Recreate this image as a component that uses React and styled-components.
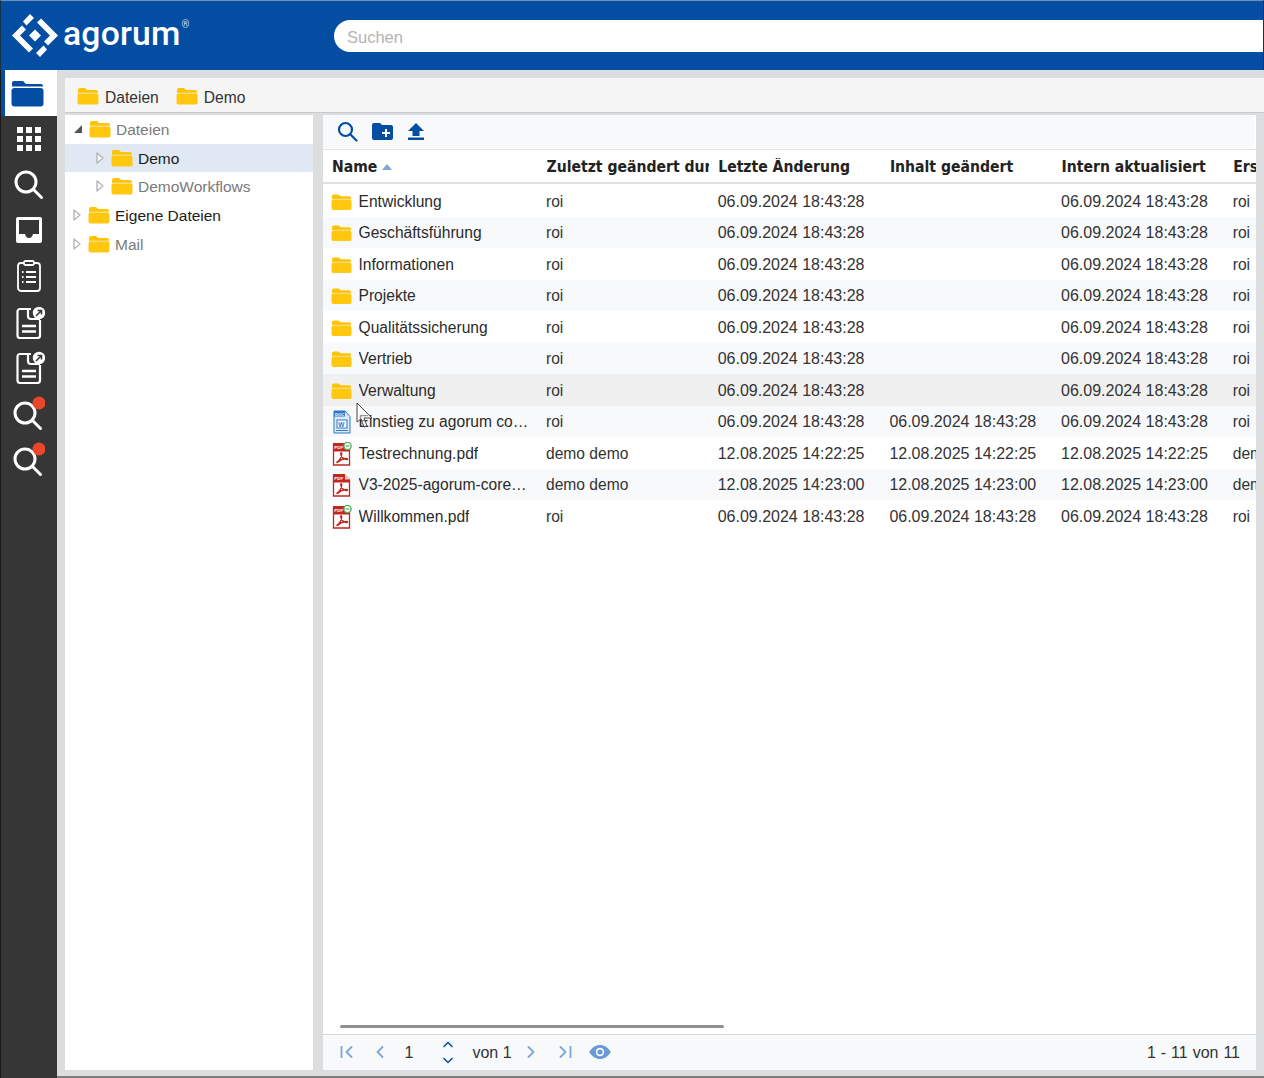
import React from "react";
import styled, { createGlobalStyle } from "styled-components";

const Global = createGlobalStyle`
  html, body { margin: 0; padding: 0; height: 100%; overflow: hidden; background: #dcdddf; }
  #root { height: 1078px; width: 1264px; overflow: hidden; }
  * { box-sizing: border-box; }
`;

const Page = styled.div`
  position: relative;
  width: 1264px; height: 1078px;
  display: flex; flex-direction: column;
  font-family: "Liberation Sans", Arial, sans-serif;
  font-size: 16px; color: #222;
  background: #dcdddf;
  overflow: hidden;
`;
const Header = styled.header`
  height: 70px; flex: none;
  background: #034ea2;
  border-top: 1px solid #6f8fb5;
  border-left: 1px solid #1c2f4a;
  border-right: 1px solid #1c2f4a;
  display: flex; align-items: flex-start;
`;
const Logo = styled.div`
  width: 333px; height: 69px; padding: 11px 0 0 11px;
  display: flex; align-items: flex-start; gap: 5px; flex: none;
`;
const LogoWord = styled.span`
  font-family: Roboto, sans-serif; padding-top: 1px;
  font-weight: 500; font-size: 33.7px; line-height: 42px; color: #fff;
  letter-spacing: 0.2px;
`;
const Reg = styled.sup`
  font-size: 10px; line-height: 9px; vertical-align: 17px; color: #cfdcee; font-weight: 400; margin-left: 1px;
`;
const Search = styled.div`
  margin-top: 19px; flex: 1; height: 32px;
  background: #fff; border-radius: 16px 0 0 16px;
  padding-left: 13px; line-height: 35px;
  font-size: 16.5px; color: #b4b4b4;
`;
const Body = styled.div`flex: 1; display: flex; min-height: 0;`;
const Rail = styled.nav`
  width: 57px; flex: none; background: #363636;
  border-left: 1px solid #1a1a1a;
  display: flex; flex-direction: column; align-items: center;
`;
const RailActive = styled.div`
  align-self: stretch; height: 46px; margin-left: 4px; background: #fff;
  display: flex; align-items: center; justify-content: center;
  padding-right: 7px; box-shadow: -4px 0 0 #034ea2;
`;
const RailIcon = styled.div`
  height: 45.7px; width: 100%; flex: none;
  display: flex; align-items: center; justify-content: center;
`;
const Work = styled.main`
  flex: 1; min-width: 0; padding: 8px 0 6px 8px;
  border-bottom: 2px solid #7d7d7d;
  display: flex; flex-direction: column;
`;
const Crumbs = styled.div`
  height: 35px; flex: none; background: #f5f5f5;
  border-bottom: 1px solid #c9c9c9;
  display: flex; align-items: center; padding: 2px 0 0 12px; gap: 17px;
`;
const Crumb = styled.div`display: flex; align-items: center; gap: 6px; color: #333; font-size: 15.6px;`;
const CrumbText = styled.span`padding-top: 3px;`;
const Split = styled.div`flex: 1; display: flex; min-height: 0; padding-top: 2px;`;
const Tree = styled.aside`
  width: 248px; flex: none; background: #fff;
`;
const TreeRow = styled.div`
  height: 28.6px; display: flex; align-items: center;
  padding-left: ${p => p.$indent}px;
  background: ${p => (p.$selected ? "#dfe8f3" : "transparent")};
  color: ${p => (p.$muted ? "#7a7a7a" : "#1c1c1c")};
  font-size: 15.5px;
`;
const Twisty = styled.span`
  width: 12px; height: 12px; flex: none; margin-right: 5px;
  display: flex; align-items: center; justify-content: center;
`;
const TreeLabel = styled.span`margin-left: 5px; padding-top: 2px;`;
const Grid = styled.section`
  width: 933px; margin-left: 10px; flex: none; background: #fff;
  display: flex; flex-direction: column; overflow: hidden;
`;
const Toolbar = styled.div`
  height: 34px; flex: none; background: #f8f9fb; margin-right: 2px;
  display: flex; align-items: center; padding: 0 0 2px 14px; gap: 13px;
`;
const HeadRow = styled.div`
  height: 35px; flex: none; display: grid;
  grid-template-columns: 214.5px 171.7px 171.7px 171.7px 171.7px 60px;
  align-items: center; padding: 1px 0 0 9px;
  border-top: 1px solid #e4e4e4; border-bottom: 2px solid #e0e0e0;
  font-family: "DejaVu Sans Condensed", "DejaVu Sans", sans-serif;
  font-stretch: condensed;
  font-weight: 700; font-size: 15.6px; color: #222;
`;
const HeadCell = styled.div`white-space: nowrap; overflow: hidden; display: flex; align-items: center; gap: 5px; margin-right: 9px;`;
const SortUp = styled.span`
  width: 0; height: 0; border-left: 5.5px solid transparent; border-right: 5.5px solid transparent;
  border-bottom: 6px solid #7ea5d6;
`;
const Rows = styled.div`flex: 1; min-height: 0; padding-top: 1px; position: relative;`;
const Row = styled.div`
  height: 31.5px; display: grid;
  grid-template-columns: 214.5px 171.7px 171.7px 171.7px 171.7px 60px;
  align-items: center; padding: 2px 0 0 8px;
  background: ${p => (p.$hover ? "#f0f0f0" : p.$alt ? "#f8f9fb" : "#fff")};
  font-size: 16px; color: #333;
`;
const NameCell = styled.div`display: flex; align-items: center; gap: 6.5px; white-space: nowrap; overflow: hidden; padding-right: 15px; font-size: 15.6px;`;
const NameText = styled.span`color: #2b2b2b; overflow: hidden; text-overflow: ellipsis;`;
const Cell = styled.div`white-space: nowrap; overflow: hidden; padding-left: 0.5px;`;
const UserCell = styled(Cell)`font-size: 15.6px;`;
const IconBox = styled.span`width: 21px; flex: none; padding-left: ${p => p.$x || 0}px; display: flex;`;
const Scrollbar = styled.div`
  position: absolute; left: 17px; bottom: 6px; width: 384px; height: 3px; background: #8f8f8f; border-radius: 2px;
`;
const Pager = styled.footer`
  height: 36px; flex: none; background: #f8f9fb; border-top: 1px solid #d8d8d8;
  display: flex; align-items: center; padding: 0 16px 1px 16.500px; color: #333; font-size: 16px;
`;
const PagerText = styled.span`margin: ${p => p.$m || "0"}; padding-top: 2px;`;
const PagerRight = styled.span`margin-left: auto; padding-top: 2px; word-spacing: 0.5px;`;
const PagerBtn = styled.span`display: flex; align-items: center; margin: ${p => p.$m || "0"};`;
const Stack = styled.span`display: flex; flex-direction: column; gap: 9px; margin: ${p => p.$m || "0"};`;
const Cursor = styled.svg`position: absolute; left: 356px; top: 402px;`;

const Folder = ({ s = 22 }) => (
  <svg width={s} height={s * 0.82} viewBox="0 0 22 18">
    <path d="M1 4V3a2 2 0 0 1 2-2h5l2 2h9a2 2 0 0 1 2 2v1H1z" fill="#ffc400" />
    <rect x="0.5" y="6.6" width="21" height="10.8" rx="2" fill="#ffc80f" />
    <rect x="1" y="5.5" width="20" height="1.1" fill="#f2d77c" />
  </svg>
);
const Pdf = ({ badge }) => (
  <svg width="20" height="24" viewBox="0 0 20 24">
    <path d="M1.500 3.500h12.500l3.500 3.500v16h-16z" fill="#fff" stroke="#c0271e" strokeWidth="1.300" />
    <path d="M1 1h11.500l5.500 5.500v3H1z" fill="#c0271e" />
    <path d="M13 1l5 5.500h-5z" fill="#f3c6c2" />
    <text x="2.300" y="6.800" fontSize="4.400" fontWeight="700" fill="#fff" fontFamily="Liberation Sans">PDF</text>
    <path d="M5 20c3-1.500 5-6 4.700-8.600-.2-1.200-1.300-.6-1 .8.6 3 3.500 5.600 6.300 5.400 1-.2.5-1.200-.8-1.100-3 .2-6 1.500-8.500 3.800-.5.500-1 .3-.7-.3z" fill="none" stroke="#c0271e" strokeWidth="1.300" />
    {badge && <>
      <circle cx="15.500" cy="4" r="3.600" fill="#fff" stroke="#4fae5b" strokeWidth="1.400" />
      <path d="M13.600 4h3.800" stroke="#4fae5b" strokeWidth="1.200" />
    </>}
  </svg>
);
const Doc = () => (
  <svg width="20" height="24" viewBox="0 0 20 24">
    <path d="M2 1h11l5 5.500V23H2z" fill="#dceaf8" stroke="#2d78c8" strokeWidth="1" />
    <path d="M2 1h11v5.500H2z" fill="#2d78c8" />
    <text x="3" y="5.800" fontSize="4.200" fontWeight="700" fill="#fff" fontFamily="Liberation Sans">DOC</text>
    <rect x="5" y="10" width="10" height="8" fill="#fff" stroke="#2d78c8" strokeWidth="1" />
    <text x="6.300" y="16.600" fontSize="6.500" fontWeight="700" fill="#2d78c8" fontFamily="Liberation Sans">W</text>
    <path d="M4 20.500h12" stroke="#2d78c8" strokeWidth="1" />
  </svg>
);

const Twist = ({ open }) => open ? (
  <svg width="10" height="10" viewBox="0 0 10 10"><path d="M9 1v8H1z" fill="#555" /></svg>
) : (
  <svg width="8" height="12" viewBox="0 0 8 12"><path d="M1 1l6 5-6 5z" fill="#fff" stroke="#b5b5b5" strokeWidth="1.400" strokeLinejoin="round" /></svg>
);

const Mag = () => (
  <svg width="30" height="30" viewBox="0 0 30 30" fill="none" stroke="#fff" strokeWidth="3" strokeLinecap="round">
    <circle cx="12" cy="12" r="10" />
    <path d="M19.500 19.500l8 8" />
  </svg>
);
const MagDot = () => (
  <svg width="32" height="36" viewBox="0 0 32 36" fill="none">
    <g stroke="#fff" strokeWidth="3" strokeLinecap="round">
      <circle cx="12" cy="18" r="10" />
      <path d="M19.500 25.500l8 8" />
    </g>
    <circle cx="26" cy="8" r="6.500" fill="#e8472a" />
  </svg>
);
const Note = () => (
  <svg width="32" height="34" viewBox="0 0 32 34" fill="none">
    <path d="M18 4H7a2.500 2.500 0 0 0-2.500 2.500v24A2.500 2.500 0 0 0 7 33h17.500a2.500 2.500 0 0 0 2.500-2.500V15" stroke="#fff" strokeWidth="2.200" />
    <path d="M15 4v7a3 3 0 0 0 3 3h9" stroke="#fff" strokeWidth="2.200" />
    <path d="M9 21h14M9 26.500h14" stroke="#fff" strokeWidth="2.400" />
    <circle cx="26" cy="8" r="6.200" fill="#fff" />
    <path d="M23 11l5.500-5.500M24.500 5.500h4v4" stroke="#363636" strokeWidth="1.500" />
  </svg>
);

const files = [
  ["Entwicklung", "f", "roi", "06.09.2024 18:43:28", "", "06.09.2024 18:43:28", "roi"],
  ["Geschäftsführung", "f", "roi", "06.09.2024 18:43:28", "", "06.09.2024 18:43:28", "roi"],
  ["Informationen", "f", "roi", "06.09.2024 18:43:28", "", "06.09.2024 18:43:28", "roi"],
  ["Projekte", "f", "roi", "06.09.2024 18:43:28", "", "06.09.2024 18:43:28", "roi"],
  ["Qualitätssicherung", "f", "roi", "06.09.2024 18:43:28", "", "06.09.2024 18:43:28", "roi"],
  ["Vertrieb", "f", "roi", "06.09.2024 18:43:28", "", "06.09.2024 18:43:28", "roi"],
  ["Verwaltung", "f", "roi", "06.09.2024 18:43:28", "", "06.09.2024 18:43:28", "roi"],
  ["Einstieg zu agorum core.docx", "d", "roi", "06.09.2024 18:43:28", "06.09.2024 18:43:28", "06.09.2024 18:43:28", "roi"],
  ["Testrechnung.pdf", "pb", "demo demo", "12.08.2025 14:22:25", "12.08.2025 14:22:25", "12.08.2025 14:22:25", "demo"],
  ["V3-2025-agorum-core-handbuch.pdf", "p", "demo demo", "12.08.2025 14:23:00", "12.08.2025 14:23:00", "12.08.2025 14:23:00", "demo"],
  ["Willkommen.pdf", "pb", "roi", "06.09.2024 18:43:28", "06.09.2024 18:43:28", "06.09.2024 18:43:28", "roi"],
];
const tree = [
  { t: "Dateien", i: 7, open: true, muted: true },
  { t: "Demo", i: 29, selected: true },
  { t: "DemoWorkflows", i: 29, muted: true },
  { t: "Eigene Dateien", i: 6 },
  { t: "Mail", i: 6, muted: true },
];
const FileIcon = ({ k }) => {
  if (k === "f") return <IconBox><Folder /></IconBox>;
  if (k === "d") return <IconBox $x={1}><Doc /></IconBox>;
  return <IconBox $x={1}><Pdf badge={k === "pb"} /></IconBox>;
};

export default function App() {
  return (
    <Page>
      <Global />
      <Header>
        <Logo>
          <svg width="46" height="47" viewBox="0 0 46 47" fill="#fff">
            <path d="M23 17.500l6 6-6 6-6-6z" />
            <path d="M46 23.500l-10 10-4-4 6-6-13-13 4-4z" />
            <path d="M0 23.500l10-10 4 4-6 6 13 13-4 4z" />
            <path d="M11 9.500L18 2l4 4-7.500 7.500z" />
            <path d="M35 37.500L28 45l-4-4 7.500-7.500z" />
          </svg>
          <LogoWord>agorum<Reg>®</Reg></LogoWord>
        </Logo>
        <Search>Suchen</Search>
      </Header>
      <Body>
        <Rail>
          <RailActive>
            <svg width="33" height="27" viewBox="0 0 33 27" fill="#034ea2">
              <path d="M1 4V3a2 2 0 0 1 2-2h9l3 3h15a2 2 0 0 1 2 2v.5H1z" />
              <rect x="0.500" y="8" width="32" height="18.500" rx="3" />
            </svg>
          </RailActive>
          <RailIcon>
            <svg width="24" height="24" viewBox="0 0 24 24" fill="#fff">
              {[0, 9, 18].flatMap(y => [0, 9, 18].map(x => <rect key={`${x}-${y}`} x={x} y={y} width="6" height="6" />))}
            </svg>
          </RailIcon>
          <RailIcon><Mag /></RailIcon>
          <RailIcon>
            <svg width="26" height="26" viewBox="0 0 26 26">
              <rect width="26" height="26" rx="2" fill="#fff" />
              <path d="M3 3h20v14h-6c-1 3-2 4-4 4s-3-1-4-4H3z" fill="#363636" />
            </svg>
          </RailIcon>
          <RailIcon>
            <svg width="24" height="32" viewBox="0 0 24 32" fill="none" stroke="#fff" strokeWidth="1.800">
              <rect x="1" y="3" width="22" height="28" rx="3" />
              <rect x="7" y="1" width="10" height="4" rx="1.500" fill="#363636" />
              <path d="M9 12h10M9 17h10M9 22h10" />
              <path d="M5 12h1.500M5 17h1.500M5 22h1.500" />
            </svg>
          </RailIcon>
          <RailIcon><Note /></RailIcon>
          <RailIcon><Note /></RailIcon>
          <RailIcon><MagDot /></RailIcon>
          <RailIcon><MagDot /></RailIcon>
        </Rail>
        <Work>
          <Crumbs>
            <Crumb><Folder /><CrumbText>Dateien</CrumbText></Crumb>
            <Crumb><Folder /><CrumbText>Demo</CrumbText></Crumb>
          </Crumbs>
          <Split>
            <Tree>
              {tree.map(n => (
                <TreeRow key={n.t} $indent={n.i} $selected={n.selected} $muted={n.muted}>
                  <Twisty><Twist open={n.open} /></Twisty>
                  <Folder />
                  <TreeLabel>{n.t}</TreeLabel>
                </TreeRow>
              ))}
            </Tree>
            <Grid>
              <Toolbar>
                <svg width="21" height="21" viewBox="0 0 21 21" fill="none" stroke="#034ea2" strokeWidth="2.200" strokeLinecap="round">
                  <circle cx="8.500" cy="8.500" r="6.500" /><path d="M13.500 13.500l6 6" />
                </svg>
                <svg width="23" height="18" viewBox="0 0 23 18">
                  <path d="M1 3a2 2 0 0 1 2-2h6l2 2h9a2 2 0 0 1 2 2v11a2 2 0 0 1-2 2H3a2 2 0 0 1-2-2z" fill="#034ea2" />
                  <path d="M15 7v8M11 11h8" stroke="#fff" strokeWidth="2" />
                </svg>
                <svg width="18" height="19" viewBox="0 0 18 19" fill="#034ea2">
                  <path d="M9 1l8 8h-4.500v5h-7V9H1z" /><rect x="1" y="15.500" width="16" height="2.500" />
                </svg>
              </Toolbar>
              <HeadRow>
                <HeadCell>Name<SortUp /></HeadCell>
                <HeadCell>Zuletzt geändert durch</HeadCell>
                <HeadCell>Letzte Änderung</HeadCell>
                <HeadCell>Inhalt geändert</HeadCell>
                <HeadCell>Intern aktualisiert</HeadCell>
                <HeadCell>Erstellt</HeadCell>
              </HeadRow>
              <Rows>
                {files.map((f, i) => (
                  <Row key={f[0]} $alt={i % 2 === 1} $hover={f[0] === "Verwaltung"}>
                    <NameCell><FileIcon k={f[1]} /><NameText>{f[0]}</NameText></NameCell>
                    <UserCell>{f[2]}</UserCell>
                    <Cell>{f[3]}</Cell>
                    <Cell>{f[4]}</Cell>
                    <Cell>{f[5]}</Cell>
                    <UserCell>{f[6]}</UserCell>
                  </Row>
                ))}
                <Scrollbar />
              </Rows>
              <Pager>
                <PagerBtn>
                  <svg width="14" height="14" viewBox="0 0 14 14" fill="none" stroke="#7ea5d6" strokeWidth="1.800"><path d="M1.500 1v12M12 1.500L6.500 7l5.500 5.500" /></svg>
                </PagerBtn>
                <PagerBtn $m="0 0 0 21px">
                  <svg width="10" height="14" viewBox="0 0 10 14" fill="none" stroke="#7ea5d6" strokeWidth="1.800"><path d="M8 1.500L2.500 7 8 12.500" /></svg>
                </PagerBtn>
                <PagerText $m="0 0 0 20px">1</PagerText>
                <Stack $m="0 0 0 29px">
                  <svg width="12" height="7" viewBox="0 0 12 7" fill="none" stroke="#034ea2" strokeWidth="1.500"><path d="M1.500 6L6 1.500 10.500 6" /></svg>
                  <svg width="12" height="7" viewBox="0 0 12 7" fill="none" stroke="#034ea2" strokeWidth="1.500"><path d="M1.500 1L6 5.500 10.500 1" /></svg>
                </Stack>
                <PagerText $m="0 0 0 18px">von 1</PagerText>
                <PagerBtn $m="0 0 0 14px">
                  <svg width="10" height="14" viewBox="0 0 10 14" fill="none" stroke="#7ea5d6" strokeWidth="1.800"><path d="M2 1.500L7.500 7 2 12.500" /></svg>
                </PagerBtn>
                <PagerBtn $m="0 0 0 22px">
                  <svg width="14" height="14" viewBox="0 0 14 14" fill="none" stroke="#7ea5d6" strokeWidth="1.800"><path d="M12.500 1v12M2 1.500L7.500 7 2 12.500" /></svg>
                </PagerBtn>
                <PagerBtn $m="0 0 0 17px">
                  <svg width="22" height="14" viewBox="0 0 22 14"><path d="M0 7c3-4.500 7-7 11-7s8 2.500 11 7c-3 4.500-7 7-11 7S3 11.500 0 7z" fill="#6a9bd3" /><circle cx="11" cy="7" r="4.200" fill="#fff" /><circle cx="11" cy="7" r="2.600" fill="#6a9bd3" /></svg>
                </PagerBtn>
                <PagerRight>1 - 11 von 11</PagerRight>
              </Pager>
            </Grid>
          </Split>
        </Work>
      </Body>
      <Cursor width="20" height="30" viewBox="0 0 20 30">
        <path d="M1 1v19l4-3 3 8 3-1-3-8h8z" fill="#fff" fillOpacity=".5" stroke="#444" strokeWidth="1" />
      </Cursor>
    </Page>
  );
}
